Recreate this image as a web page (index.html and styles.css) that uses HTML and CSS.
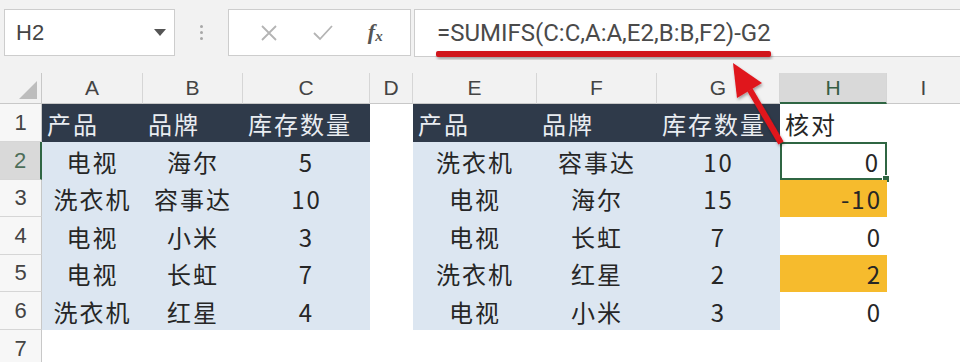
FILE: index.html
```html
<!DOCTYPE html>
<html lang="zh">
<head>
<meta charset="utf-8">
<title>SUMIFS 核对</title>
<link rel="stylesheet" href="styles.css">
</head>
<body>
<div class="page">
  <div class="toolbar">
    <div class="namebox">
      <span class="nb-text">H2</span>
      <svg class="caret" width="12" height="7" viewBox="0 0 12 7"><path d="M0 0 L12 0 L6 7 Z" fill="#555"/></svg>
    </div>
    <div class="dots"><i></i><i></i><i></i></div>
    <div class="fnbox">
      <svg class="ico" width="18" height="18" viewBox="0 0 18 18"><path d="M2 2 L16 16 M16 2 L2 16" stroke="#b4b4b4" stroke-width="1.8" fill="none"/></svg>
      <svg class="ico" width="20" height="18" viewBox="0 0 20 18"><path d="M1 9 L7 15 L19 2" stroke="#b4b4b4" stroke-width="1.8" fill="none"/></svg>
      <span class="fx">f<sub>x</sub></span>
    </div>
    <div class="formula"><span class="ftext">=SUMIFS(C:C,A:A,E2,B:B,F2)-G2</span></div>
  </div>

  <div class="sheet">
    <div class="corner"><svg width="18" height="18" viewBox="0 0 18 18"><path d="M18 0 L18 18 L0 18 Z" fill="#bdbdbd"/></svg></div>
    <div class="ch">A</div><div class="ch">B</div><div class="ch">C</div><div class="ch">D</div>
    <div class="ch">E</div><div class="ch">F</div><div class="ch">G</div><div class="ch ch-sel">H</div><div class="ch ch-last">I</div>

    <div class="rh">1</div>
    <div class="c dk l">产品</div><div class="c dk l">品牌</div><div class="c dk l">库存数量</div><div class="c"></div>
    <div class="c dk l">产品</div><div class="c dk l">品牌</div><div class="c dk l">库存数量</div><div class="c l">核对</div><div class="c"></div>

    <div class="rh rh-sel">2</div>
    <div class="c bl">电视</div><div class="c bl">海尔</div><div class="c bl">5</div><div class="c"></div>
    <div class="c bl">洗衣机</div><div class="c bl">容事达</div><div class="c bl">10</div><div class="c r sel">0<span class="handle"></span></div><div class="c"></div>

    <div class="rh">3</div>
    <div class="c bl">洗衣机</div><div class="c bl">容事达</div><div class="c bl">10</div><div class="c"></div>
    <div class="c bl">电视</div><div class="c bl">海尔</div><div class="c bl">15</div><div class="c r og">-10</div><div class="c"></div>

    <div class="rh">4</div>
    <div class="c bl">电视</div><div class="c bl">小米</div><div class="c bl">3</div><div class="c"></div>
    <div class="c bl">电视</div><div class="c bl">长虹</div><div class="c bl">7</div><div class="c r">0</div><div class="c"></div>

    <div class="rh">5</div>
    <div class="c bl">电视</div><div class="c bl">长虹</div><div class="c bl">7</div><div class="c"></div>
    <div class="c bl">洗衣机</div><div class="c bl">红星</div><div class="c bl">2</div><div class="c r og">2</div><div class="c"></div>

    <div class="rh">6</div>
    <div class="c bl">洗衣机</div><div class="c bl">红星</div><div class="c bl">4</div><div class="c"></div>
    <div class="c bl">电视</div><div class="c bl">小米</div><div class="c bl">3</div><div class="c r">0</div><div class="c"></div>

    <div class="rh">7</div>
    <div class="c"></div><div class="c"></div><div class="c"></div><div class="c"></div>
    <div class="c"></div><div class="c"></div><div class="c"></div><div class="c"></div><div class="c"></div>
  </div>

  <svg class="overlay" width="960" height="362" viewBox="0 0 960 362">
    <defs>
      <filter id="sh" x="-20%" y="-20%" width="140%" height="160%">
        <feDropShadow dx="1" dy="2" stdDeviation="1.5" flood-color="#000" flood-opacity="0.35"/>
      </filter>
    </defs>
    <rect x="436" y="51" width="335" height="6" rx="2" fill="#d0141c" filter="url(#sh)"/>
    <g filter="url(#sh)">
      <line x1="781" y1="143" x2="750" y2="90" stroke="#e0141c" stroke-width="6"/>
      <path d="M733 63 L762 83 L737 98 Z" fill="#e0141c"/>
    </g>
  </svg>
</div>
</body>
</html>
```
FILE: styles.css
```css
* { box-sizing: border-box; }
html, body { margin: 0; padding: 0; background: #ffffff; }
.page {
  position: relative;
  width: 960px;
  height: 362px;
  overflow: hidden;
  font-family: "Noto Sans CJK SC", "Noto Sans", sans-serif;
}

.toolbar {
  height: 73px;
  background: #f2f2f2;
  display: flex;
  align-items: flex-start;
  padding-top: 9px;
  padding-left: 4px;
}
.namebox {
  width: 171px;
  height: 47px;
  background: #fff;
  border: 1px solid #cdcdcd;
  display: flex;
  align-items: center;
  justify-content: space-between;
  padding: 0 8px 0 11px;
}
.nb-text {
  font-family: "Liberation Sans", Arial, sans-serif;
  font-size: 22px;
  color: #444;
}
.dots {
  width: 53px;
  height: 47px;
  display: flex;
  flex-direction: column;
  align-items: center;
  justify-content: center;
  gap: 3px;
}
.dots i { display: block; width: 3px; height: 3px; background: #a8a8a8; border-radius: 50%; }
.fnbox {
  width: 183px;
  height: 47px;
  background: #fff;
  border: 1px solid #cdcdcd;
  display: flex;
  align-items: center;
  justify-content: space-around;
  padding: 0 10px 0 14px;
}
.fx {
  font-family: "Liberation Serif", "Times New Roman", serif;
  font-style: italic;
  font-weight: bold;
  font-size: 22px;
  color: #555;
  line-height: 1;
}
.fx sub { font-size: 15px; vertical-align: -2px; }
.formula {
  flex: 1;
  height: 48px;
  margin-left: 3px;
  background: #fff;
  border: 1px solid #cdcdcd;
  border-right: none;
  display: flex;
  align-items: center;
  padding-left: 22px;
}
.ftext {
  font-family: Roboto, "Liberation Sans", sans-serif;
  font-size: 24px;
  color: #4a4a4a;
}

.sheet {
  display: grid;
  grid-template-columns: 42px 101px 100px 127px 43px 124px 120px 123px 107px 1fr;
  grid-template-rows: 31px 38px 38px 37px 38px 37px 38px 38px;
}
.corner {
  background: #f2f2f2;
  border-right: 1px solid #c8c8c8;
  border-bottom: 1px solid #c8c8c8;
  display: flex;
  align-items: flex-end;
  justify-content: flex-end;
  padding: 0 4px 4px 0;
}
.ch {
  background: #f2f2f2;
  border-right: 1px solid #d6d6d6;
  border-bottom: 1px solid #c8c8c8;
  font-family: "Liberation Sans", Arial, sans-serif;
  font-size: 21px;
  color: #444;
  display: flex;
  align-items: center;
  justify-content: center;
}
.ch-sel {
  background: #d9d9d9;
  border-bottom: 2px solid #2f6643;
  color: #355e44;
}
.ch-last { border-right: none; }
.rh {
  background: #f7f7f7;
  border-right: 1px solid #c8c8c8;
  border-bottom: 1px solid #d6d6d6;
  font-family: "Liberation Sans", Arial, sans-serif;
  font-size: 22px;
  color: #444;
  display: flex;
  align-items: center;
  justify-content: center;
}
.rh-sel {
  background: #d9d9d9;
  border-right: 2px solid #2f6643;
  color: #4d6e59;
}
.c {
  position: relative;
  font-size: 24px;
  letter-spacing: 2px;
  color: #262626;
  display: flex;
  align-items: center;
  justify-content: center;
  white-space: nowrap;
}
.c.l { justify-content: flex-start; padding-left: 5px; }
.c.r { justify-content: flex-end; padding-right: 5px; }
.dk { background: #2f3a4a; color: #e9ecf1; }
.bl { background: #dce6f1; }
.og { background: #f6bb2d; }
.sel {
  border: 2px solid #2f6643;
  padding-right: 3px;
}
.handle {
  position: absolute;
  right: -5px;
  bottom: -5px;
  width: 8px;
  height: 8px;
  background: #2f6643;
  border: 1px solid #fff;
}
.overlay {
  position: absolute;
  left: 0;
  top: 0;
  pointer-events: none;
}
```
